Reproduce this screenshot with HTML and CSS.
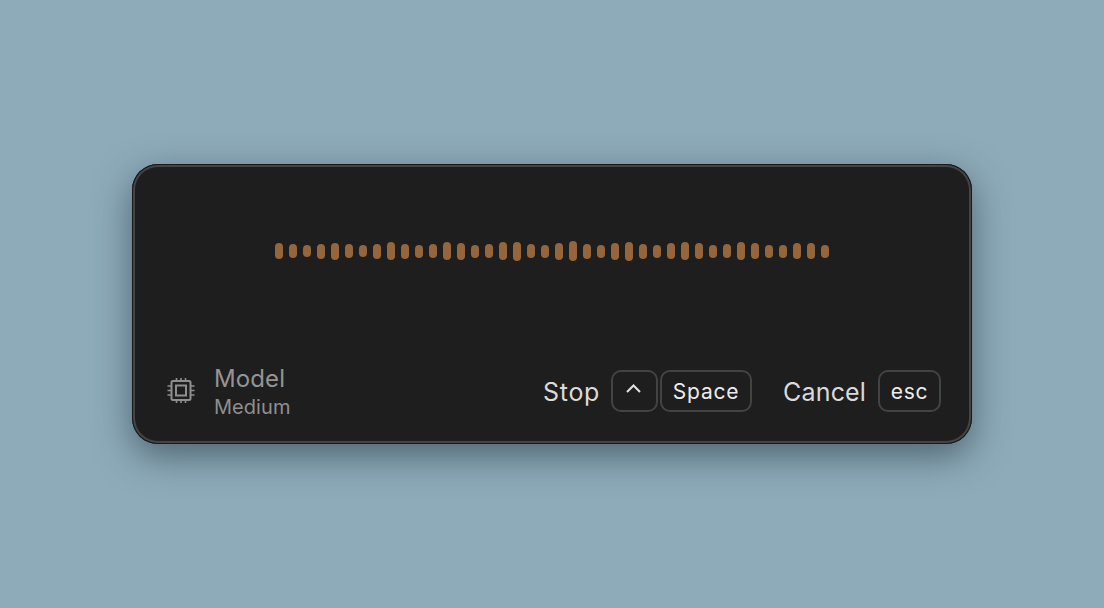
FILE: index.html
```html
<!DOCTYPE html>
<html lang="en">
<head>
    <meta charset="UTF-8">
    <title>Recording</title>
    <link rel="stylesheet" href="styles.css">
</head>
<body>
    <div class="panel">
        <!-- waveform -->
        <div class="wave">
            <span class="bar h16"></span><span class="bar h14"></span><span class="bar h12"></span><span class="bar h15"></span>
            <span class="bar h17"></span><span class="bar h14"></span><span class="bar h12"></span><span class="bar h15"></span>
            <span class="bar h18"></span><span class="bar h15"></span><span class="bar h13"></span><span class="bar h14"></span>
            <span class="bar h18"></span><span class="bar h17"></span><span class="bar h13"></span><span class="bar h14"></span>
            <span class="bar h18"></span><span class="bar h19"></span><span class="bar h14"></span><span class="bar h13"></span>
            <span class="bar h17"></span><span class="bar h20"></span><span class="bar h15"></span><span class="bar h13"></span>
            <span class="bar h17"></span><span class="bar h19"></span><span class="bar h15"></span><span class="bar h13"></span>
            <span class="bar h16"></span><span class="bar h18"></span><span class="bar h16"></span><span class="bar h13"></span>
            <span class="bar h14"></span><span class="bar h18"></span><span class="bar h16"></span><span class="bar h13"></span>
            <span class="bar h13"></span><span class="bar h16"></span><span class="bar h16"></span><span class="bar h13"></span>
        </div>

        <!-- footer -->
        <div class="footer">
            <div class="model">
                <svg class="chip" width="28" height="28" viewBox="0 0 28 28" fill="none" stroke="#8f8f8f">
                    <rect x="4.5" y="4" width="19" height="19" rx="1.5" stroke-width="2"/>
                    <rect x="9" y="8.5" width="10" height="10" stroke-width="2"/>
                    <path d="M9.500 1v2.500M14 1v2.500M18.500 1v2.500M9.500 23.500V26M14 23.500V26M18.500 23.500V26M.5 9h3.500M.5 13.500h3.500M.5 18h3.500M24 9h3.500M24 13.500h3.500M24 18h3.500" stroke-width="1.6"/>
                </svg>
                <div class="model-text">
                    <div class="model-name">Model</div>
                    <div class="model-value">Medium</div>
                </div>
            </div>
            <div class="actions">
                <div class="action stop">
                    <span class="action-label">Stop</span>
                    <span class="keys">
                        <span class="key key-ctrl">
                            <svg width="17" height="12" viewBox="0 0 17 12" fill="none" stroke="#e2e2e2" stroke-width="2">
                                <path d="M2 10l6.500-6.500 6.500 6.500"/>
                            </svg>
                        </span>
                        <span class="key key-space">Space</span>
                    </span>
                </div>
                <div class="action">
                    <span class="action-label">Cancel</span>
                    <span class="key key-esc">esc</span>
                </div>
            </div>
        </div>
    </div>
</body>
</html>
```

FILE: styles.css
```css
* {
    box-sizing: border-box;
    margin: 0;
    padding: 0;
}
body {
    width: 1104px;
    height: 608px;
    overflow: hidden;
    background-color: #8eabb9;
    font-family: 'Inter', sans-serif;
    display: flex;
    justify-content: center;
    padding-top: 164px;
}
.panel {
    width: 840px;
    height: 280px;
    padding: 0 31px 32px 35px;
    background-color: #1e1e1e;
    border-radius: 26px;
    display: flex;
    flex-direction: column;
    box-shadow:
        inset 0 0 0 1px #18191b,
        inset 0 0 0 3px #444446,
        0 12px 36px rgba(36, 54, 66, 0.6);
}
/* waveform */
.wave {
    height: 174px;
    display: flex;
    justify-content: center;
    align-items: center;
    gap: 6px;
    margin-left: -4px;
    flex: none;
    margin-bottom: 32px;
}
.bar {
    width: 8px;
    border-radius: 4px;
    background-color: #95653b;
}
.h12 { height: 12px; }
.h13 { height: 13px; }
.h14 { height: 14px; }
.h15 { height: 15px; }
.h16 { height: 16px; }
.h17 { height: 17px; }
.h18 { height: 18px; }
.h19 { height: 19px; }
.h20 { height: 20px; }
/* footer */
.footer {
    display: flex;
    justify-content: space-between;
    align-items: center;
    height: 42px;
}
.model {
    display: flex;
    align-items: center;
    gap: 19px;
}
.chip {
    display: block;
}
.model-text {
    padding-top: 2px;
}
.model-name {
    font-size: 24px;
    line-height: 30px;
    color: #949494;
    letter-spacing: 0.1px;
}
.model-value {
    font-size: 20px;
    line-height: 26px;
    color: #8f8f8f;
    letter-spacing: 0.05px;
}
.actions {
    display: flex;
    align-items: center;
    gap: 31px;
}
.action {
    display: flex;
    align-items: center;
    gap: 12px;
}
.action-label {
    font-size: 25px;
    padding-top: 2px;
    letter-spacing: 0.15px;
    color: #dadada;
}
.stop {
    gap: 11px;
}
.stop .action-label {
    letter-spacing: 0.7px;
}
.keys {
    display: flex;
    gap: 2px;
}
.key {
    height: 42px;
    border: 2px solid #434343;
    border-radius: 10px;
    display: flex;
    align-items: center;
    justify-content: center;
    font-size: 21px;
    letter-spacing: 0.8px;
    color: #ececec;
}
.key-ctrl {
    width: 47px;
    padding: 0 2px 6px 0;
}
.key-space {
    width: 92px;
}
.key-esc {
    width: 63px;
}
```
